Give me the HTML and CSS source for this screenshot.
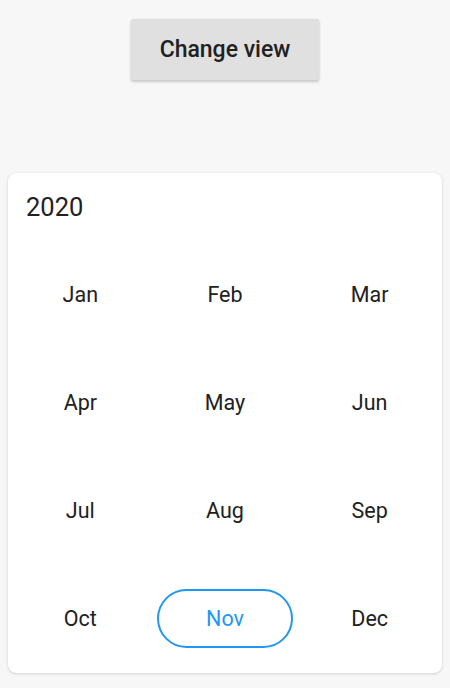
FILE: index.html
```html
<!DOCTYPE html>
<html>
<head>
<meta charset="utf-8">
<link rel="stylesheet" href="styles.css">
</head>
<body>
<div class="page">
  <div class="top">
    <button class="btn">Change view</button>
  </div>
  <div class="card">
    <div class="header">2020</div>
    <div class="grid">
      <div class="cell"><span class="m">Jan</span></div>
      <div class="cell"><span class="m">Feb</span></div>
      <div class="cell"><span class="m">Mar</span></div>
      <div class="cell"><span class="m">Apr</span></div>
      <div class="cell"><span class="m">May</span></div>
      <div class="cell"><span class="m">Jun</span></div>
      <div class="cell"><span class="m">Jul</span></div>
      <div class="cell"><span class="m">Aug</span></div>
      <div class="cell"><span class="m">Sep</span></div>
      <div class="cell"><span class="m">Oct</span></div>
      <div class="cell"><span class="m sel">Nov</span></div>
      <div class="cell"><span class="m">Dec</span></div>
    </div>
  </div>
</div>
</body>
</html>
```
FILE: styles.css
```css
html, body {
  margin: 0;
  padding: 0;
  background: #f7f7f8;
  font-family: Roboto, "Noto Sans", sans-serif;
  color: #212121;
}
.page {
  width: 450px;
  height: 688px;
  padding: 0 8px;
  box-sizing: border-box;
}
.top {
  display: flex;
  justify-content: center;
  padding-top: 19px;
  height: 173px;
  box-sizing: border-box;
}
.btn {
  width: 188px;
  height: 61px;
  border: none;
  border-radius: 2px;
  background: #e0e0e0;
  box-shadow: 0 2px 3px rgba(0,0,0,0.18), 0 0 2px rgba(0,0,0,0.08);
  font-family: Roboto, sans-serif;
  font-weight: 500;
  font-size: 23px;
  color: #212121;
  padding: 0;
}
.card {
  background: #fff;
  border-radius: 8px;
  box-shadow: 0 1px 3px rgba(0,0,0,0.15), 0 0 1px rgba(0,0,0,0.1);
  height: 500px;
  display: flex;
  flex-direction: column;
}
.header {
  height: 67px;
  box-sizing: border-box;
  padding-left: 18px;
  padding-top: 16px;
  font-size: 25.5px;
  line-height: 36px;
}
.grid {
  flex: 1;
  display: grid;
  grid-template-columns: repeat(3, 1fr);
  grid-template-rows: repeat(4, 1fr);
}
.cell {
  display: flex;
  align-items: center;
  justify-content: center;
}
.m {
  font-size: 21.5px;
  width: 136px;
  height: 59px;
  box-sizing: border-box;
  display: flex;
  align-items: center;
  justify-content: center;
  border-radius: 30px;
}
.sel {
  border: 2px solid #2196f3;
  color: #2196f3;
}
```
